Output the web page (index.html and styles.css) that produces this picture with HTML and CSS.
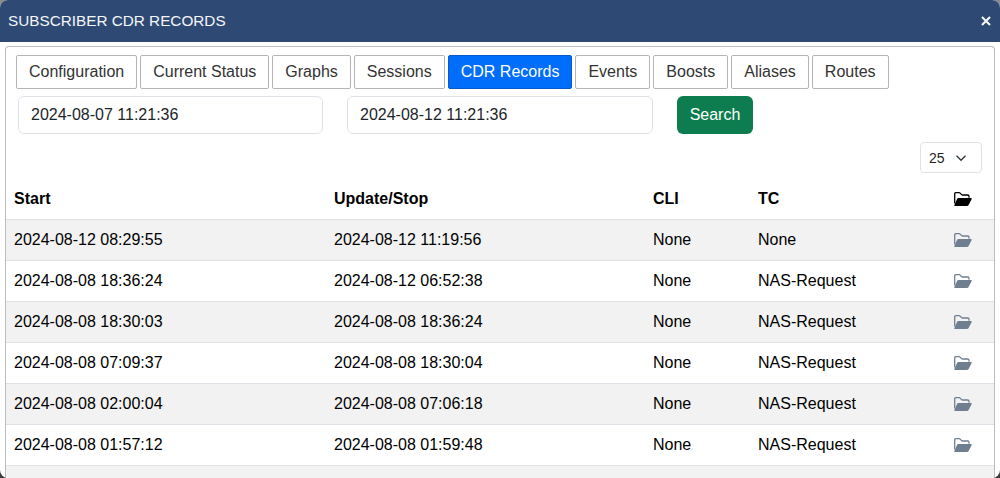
FILE: index.html
```html
<!DOCTYPE html>
<html lang="en">
<head>
    <meta charset="UTF-8">
    <meta name="viewport" content="width=device-width, initial-scale=1.0">
    <title>Subscriber CDR Records</title>
    <link rel="stylesheet" href="styles.css">
</head>

<body>
    <svg class="icon-defs" width="0" height="0" aria-hidden="true">
        <symbol id="folder-open" viewBox="0 0 18 14">
            <path class="folder-back" d="M.7 11.5V1.8Q.7.7 1.8.7h3.4q.5 0 .9.4l1.5 1.5q.4.4.9.4h5.2q1.3 0 1.3 1.3v1.4" />
            <path d="M4.3 6h12.6q1.3 0 .7 1.2l-3 5.8q-.5 1-1.6 1H1.1Q-.1 14 .5 12.800l2.500-5.800Q3.400 6 4.300 6z" />
        </symbol>
    </svg>

    <div class="modal">
        <div class="modal-header">
            <span class="modal-title">SUBSCRIBER CDR RECORDS</span>
            <button class="close-btn" aria-label="Close">
                <svg viewBox="0 0 10 10" width="10" height="10"><path d="M1 1l8 8M9 1l-8 8" /></svg>
            </button>
        </div>

        <div class="modal-body">
            <div class="tabs">
                <a class="tab">Configuration</a>
                <a class="tab">Current Status</a>
                <a class="tab">Graphs</a>
                <a class="tab">Sessions</a>
                <a class="tab active">CDR Records</a>
                <a class="tab">Events</a>
                <a class="tab">Boosts</a>
                <a class="tab">Aliases</a>
                <a class="tab">Routes</a>
            </div>

            <div class="search-row">
                <input class="date-input" type="text" value="2024-08-07 11:21:36">
                <input class="date-input wide" type="text" value="2024-08-12 11:21:36">
                <button class="search-btn">Search</button>
            </div>

            <div class="page-size-row">
                <div class="page-size">
                    25
                    <svg viewBox="0 0 16 16"><path d="M2 5l6 6 6-6" /></svg>
                </div>
            </div>

            <table class="cdr-table">
                <colgroup>
                    <col class="col-start">
                    <col class="col-stop">
                    <col class="col-cli">
                    <col class="col-tc">
                    <col>
                </colgroup>
                <thead>
                    <tr>
                        <th>Start</th>
                        <th>Update/Stop</th>
                        <th>CLI</th>
                        <th>TC</th>
                        <th><svg class="folder"><use href="#folder-open" /></svg></th>
                    </tr>
                </thead>
                <tbody>
                    <tr>
                        <td>2024-08-12 08:29:55</td>
                        <td>2024-08-12 11:19:56</td>
                        <td>None</td>
                        <td>None</td>
                        <td><svg class="folder"><use href="#folder-open" /></svg></td>
                    </tr>
                    <tr>
                        <td>2024-08-08 18:36:24</td>
                        <td>2024-08-12 06:52:38</td>
                        <td>None</td>
                        <td>NAS-Request</td>
                        <td><svg class="folder"><use href="#folder-open" /></svg></td>
                    </tr>
                    <tr>
                        <td>2024-08-08 18:30:03</td>
                        <td>2024-08-08 18:36:24</td>
                        <td>None</td>
                        <td>NAS-Request</td>
                        <td><svg class="folder"><use href="#folder-open" /></svg></td>
                    </tr>
                    <tr>
                        <td>2024-08-08 07:09:37</td>
                        <td>2024-08-08 18:30:04</td>
                        <td>None</td>
                        <td>NAS-Request</td>
                        <td><svg class="folder"><use href="#folder-open" /></svg></td>
                    </tr>
                    <tr>
                        <td>2024-08-08 02:00:04</td>
                        <td>2024-08-08 07:06:18</td>
                        <td>None</td>
                        <td>NAS-Request</td>
                        <td><svg class="folder"><use href="#folder-open" /></svg></td>
                    </tr>
                    <tr>
                        <td>2024-08-08 01:57:12</td>
                        <td>2024-08-08 01:59:48</td>
                        <td>None</td>
                        <td>NAS-Request</td>
                        <td><svg class="folder"><use href="#folder-open" /></svg></td>
                    </tr>
                    <tr>
                        <td>&nbsp;</td>
                        <td></td>
                        <td></td>
                        <td></td>
                        <td></td>
                    </tr>
                </tbody>
            </table>
        </div>
    </div>
</body>
</html>
```

FILE: styles.css
```css
html, body {
    width: 100%;
    height: 100%;
    margin: 0;
    overflow: hidden;
}

body {
    background: linear-gradient(#8c8c8c, #3c3c3c);
    color: #000000;
    font-family: "Liberation Sans", Arial, sans-serif;
    font-size: 16px;
}

.icon-defs {
    position: absolute;
}

.modal {
    display: flex;
    flex-direction: column;
    height: 478px;
    border-radius: 8px;
    background-color: #ffffff;
    overflow: hidden;
}

.modal-header {
    display: flex;
    justify-content: space-between;
    align-items: center;
    flex: none;
    height: 42px;
    padding: 0 9px 0 8px;
    box-sizing: border-box;
    background-color: #2e4a74;
    color: #f4f6f9;
}
.modal-title {
    font-size: 15.3px;
}

.close-btn {
    display: flex;
    padding: 0;
    border: 0;
    background: none;
}
.close-btn > svg {
    fill: none;
    stroke: #ffffff;
    stroke-width: 2;
}

.modal-body {
    flex: 1;
    margin: 4px 5px 0;
    border: 1px solid #bdbdbd;
    border-bottom: 0;
    border-radius: 4px 4px 0 0;
    overflow: hidden;
}

.tabs {
    display: flex;
    gap: 3px;
    padding: 8px 10px 0;
}
.tab {
    height: 34px;
    padding: 0 12px;
    box-sizing: border-box;
    border: 1px solid #b5b5b5;
    border-radius: 2px;
    color: #333333;
    line-height: 32px;
}
.tab.active {
    background-color: #006dfb;
    border-color: #0a58ca;
    color: #ffffff;
}

.search-row {
    display: flex;
    gap: 24px;
    padding: 7px 12px 0;
}
.date-input {
    width: 305px;
    height: 38px;
    padding: 0 12px;
    box-sizing: border-box;
    border: 1px solid #dee2e6;
    border-radius: 6px;
    color: #212529;
    font: inherit;
}
.date-input.wide {
    width: 306px;
}
.search-btn {
    width: 76px;
    height: 38px;
    padding: 0;
    border: 0;
    border-radius: 6px;
    background-color: #0d7d4f;
    color: #ffffff;
    font: inherit;
}

.page-size-row {
    display: flex;
    justify-content: flex-end;
    padding: 8px 12px 0 0;
}
.page-size {
    display: flex;
    justify-content: space-between;
    align-items: center;
    width: 62px;
    height: 31px;
    padding: 0 14px 0 8px;
    box-sizing: border-box;
    border: 1px solid #dee2e6;
    border-radius: 4px;
    color: #212529;
    font-size: 14px;
}
.page-size > svg {
    width: 12px;
    height: 12px;
    fill: none;
    stroke: #343a40;
    stroke-width: 1.8;
}

.cdr-table {
    width: 100%;
    margin-top: 6px;
    border-collapse: collapse;
    table-layout: fixed;
}
.col-start { width: 320px; }
.col-stop { width: 319px; }
.col-cli { width: 105px; }
.col-tc { width: 196px; }

.cdr-table th,
.cdr-table td {
    height: 40px;
    padding: 0 8px;
    border-bottom: 1px solid #dee2e6;
    text-align: left;
}
.cdr-table tbody tr:nth-child(odd) {
    background-color: #f2f2f2;
}

.folder {
    display: block;
    width: 18px;
    height: 14px;
    fill: #000000;
}
.folder-back {
    fill: none;
    stroke: currentColor;
    stroke-width: 1.3;
}
.cdr-table th .folder {
    color: #000000;
}
.cdr-table td .folder {
    color: #6f7f90;
    fill: #6f7f90;
}
```
